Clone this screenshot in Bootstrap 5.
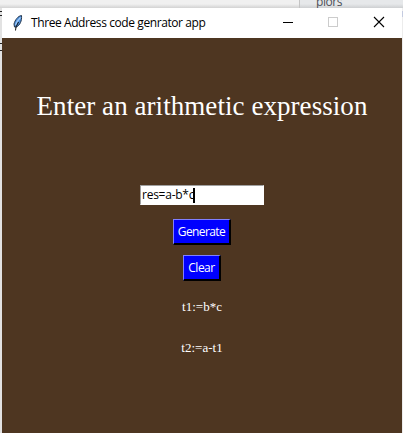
<!DOCTYPE html>
<html lang="en">
<head>
<meta charset="utf-8">
<title>Three Address code genrator app</title>
<link rel="stylesheet" href="https://cdn.jsdelivr.net/npm/bootstrap@5.3.0/dist/css/bootstrap.min.css">
<style>
html, body { width: 403px; height: 433px; }
body { background: #e9e9e9; font-family: "Open Sans", "Noto Sans", sans-serif; font-size: 12px; color: #000; }
.backdrop { height: 8px; background: linear-gradient(#f0f0f0 0 4px, #d2d2d2); }
.backdrop-pane { width: 104px; border-left: 1px solid #c4c4c4; background: linear-gradient(#e6e8ea 0 4px, #cdcfd1); padding-left: 16px; }
.backdrop-text { color: #4c5058; line-height: 16px; margin-top: -6px; letter-spacing: -.45px; }
.left-strip { width: 2px; background: #e2e2e2; }
.left-strip i { display: block; height: 1px; background: #222; }
.right-strip { width: 1px; background: linear-gradient(#eee 0 3px, #c4cbe0 3px 9px, #ececec 9px); }
.titlebar { height: 30px; background: #fff; }
.feather { margin-left: 10px; }
.caption-text { margin-left: 7px; line-height: 30px; font-size: 12px; letter-spacing: -.41px; white-space: pre; }
.client { background: #4e3621; }
.heading { font: 27px/32px "Liberation Serif", serif; letter-spacing: .06px; color: #fff; margin-top: 52px; white-space: nowrap; }
.entry { width: 124px; height: 20px; margin-top: 63px; background: #fff; border: 1px solid #fff; border-top-color: #a0a0a0; border-left-color: #a0a0a0; line-height: 18px; letter-spacing: -.25px; padding-left: 1px; }
.caret { width: 2px; height: 15px; background: #000; margin-left: -1px; }
.tk-btn { --bs-btn-font-size: 12px; --bs-btn-line-height: 23px; --bs-btn-padding-x: 0; --bs-btn-padding-y: 0; --bs-btn-border-radius: 0; height: 26px; background: #00f; color: #fff; border-style: solid; border-width: 1px 2px 2px 1px; border-color: #8080ff #000 #000 #8080ff; }
.gen { width: 58px; margin-top: 14px; letter-spacing: -.6px; }
.clr { width: 38px; margin-top: 10px; letter-spacing: -.5px; }
.result { font: 13px/16px "Liberation Serif", serif; color: #fff; }
</style>
<script src="https://cdn.jsdelivr.net/npm/bootstrap@5.3.0/dist/js/bootstrap.bundle.min.js"></script>
</head>
<body class="d-flex flex-column overflow-hidden m-0">
<div class="backdrop d-flex justify-content-end flex-shrink-0 overflow-hidden">
  <div class="backdrop-pane"><div class="backdrop-text">plors</div></div>
</div>
<div class="d-flex flex-grow-1">
  <div class="left-strip"><i style="margin-top:3px"></i><i style="margin-top:3px"></i><i style="margin-top:27px"></i><i style="margin-top:6px"></i></div>
  <main class="d-flex flex-column flex-grow-1">
    <header class="titlebar d-flex align-items-center">
      <svg class="feather" width="12" height="18" viewBox="0 0 12 18">
        <path d="M9.500 1.500C6 2 3 6 2 10L2.500 13L4.500 13C8 11 10 7 9.500 1.500Z" fill="#4d8fdc" stroke="#26384e" stroke-width="1"/>
        <path d="M8.500 3.500C6 6 4.500 8 3.500 11" fill="none" stroke="#a4cdf8" stroke-width="1.200"/>
        <path d="M6.500 8L4 13L3.500 16.500" fill="none" stroke="#111" stroke-width="1"/>
      </svg>
      <span class="caption-text">Three Address code genrator app</span>
      <svg class="ms-auto" width="123" height="30" viewBox="0 0 123 30" fill="none" shape-rendering="crispEdges">
        <path d="M4 14.500H14" stroke="#000"/>
        <rect x="49.500" y="9.500" width="9" height="9" stroke="#ccc"/>
        <path d="M95 9L105 19M105 9L95 19" stroke="#000" stroke-width="1.100" shape-rendering="auto"/>
      </svg>
    </header>
    <section class="client flex-grow-1 d-flex flex-column align-items-center">
      <div class="heading">Enter an arithmetic expression</div>
      <div class="entry d-flex align-items-center"><span>res=a-b*c</span><span class="caret"></span></div>
      <button class="btn tk-btn gen" type="button">Generate</button>
      <button class="btn tk-btn clr" type="button">Clear</button>
      <div class="result" style="margin-top:18px">t1:=b*c</div>
      <div class="result" style="margin-top:25px">t2:=a-t1</div>
    </section>
  </main>
  <div class="right-strip"></div>
</div>
</body>
</html>
